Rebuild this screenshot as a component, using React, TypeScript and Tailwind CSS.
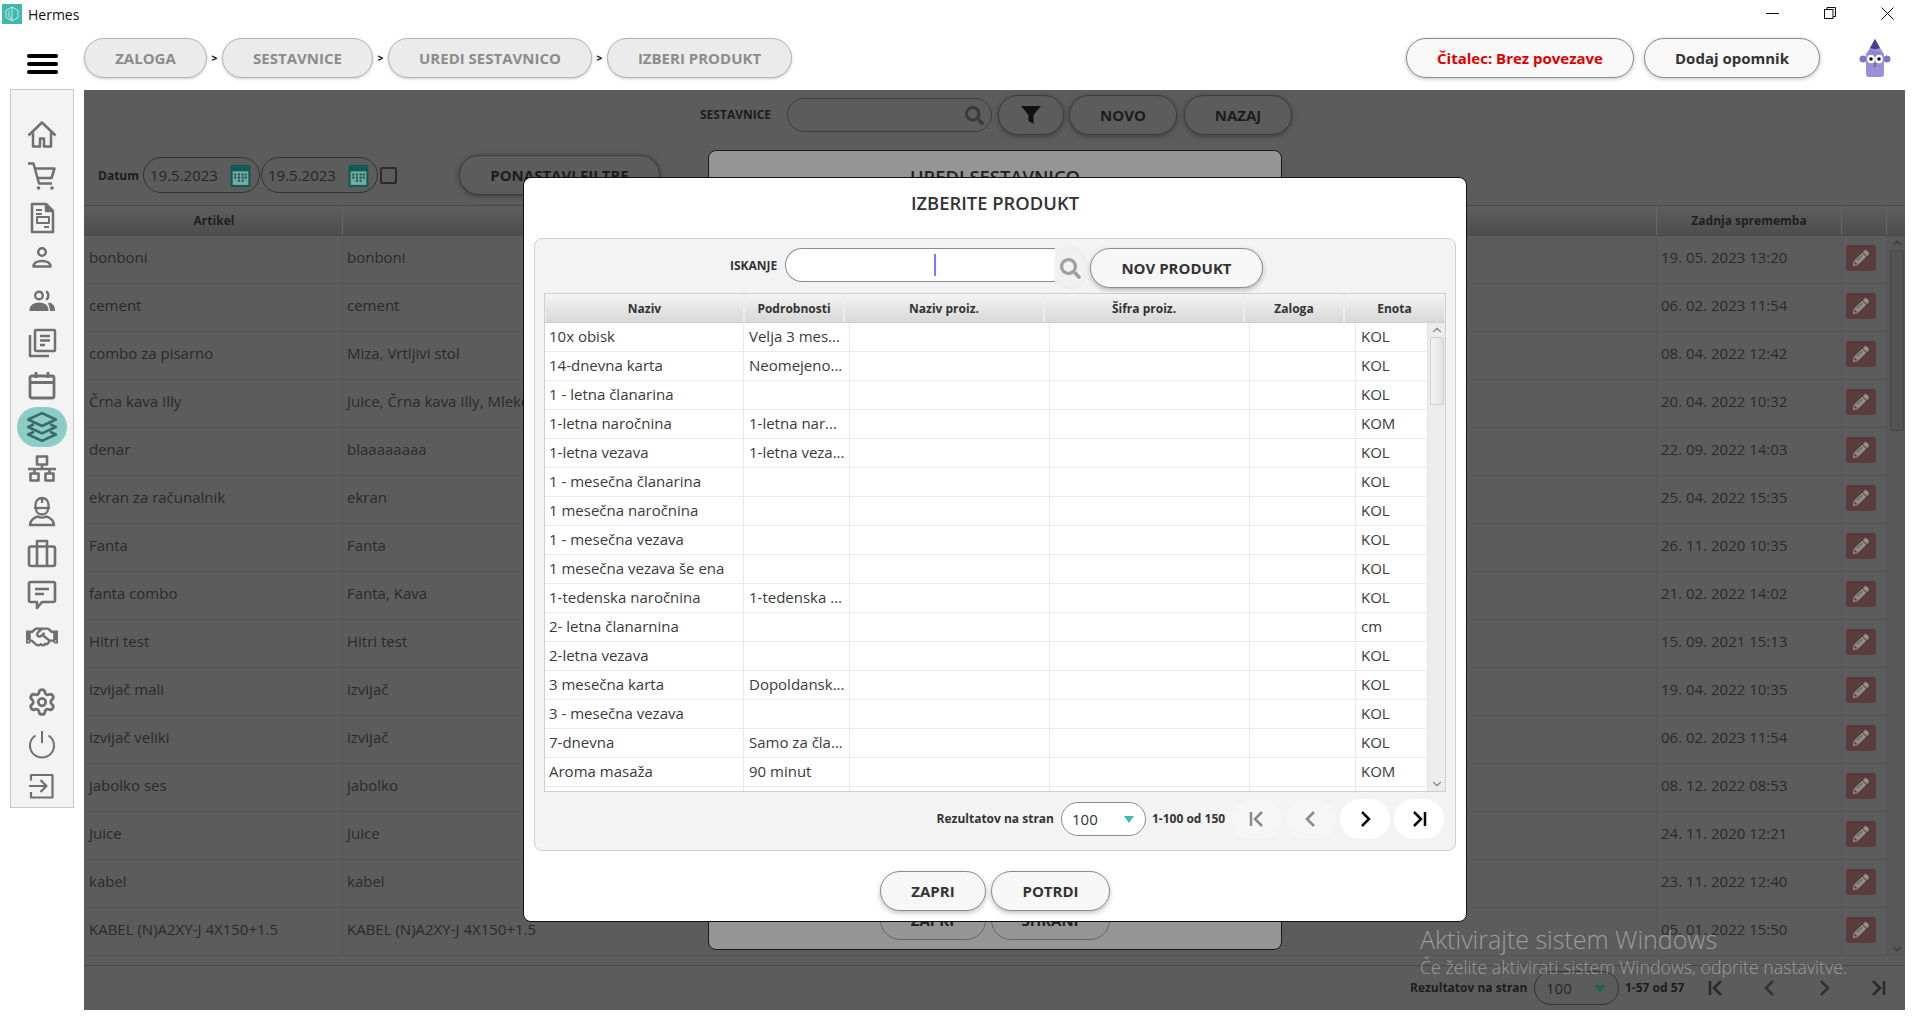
import React from "react";
import { Settings, ChevronUp, ChevronDown } from "lucide-react";
import { FaPencilAlt, FaRegHandshake, FaSearch } from "react-icons/fa";

const bgRows = [
  ["bonboni", "bonboni", "19. 05. 2023 13:20"],
  ["cement", "cement", "06. 02. 2023 11:54"],
  ["combo za pisarno", "Miza, Vrtljivi stol", "08. 04. 2022 12:42"],
  ["Črna kava Illy", "Juice, Črna kava Illy, Mleko", "20. 04. 2022 10:32"],
  ["denar", "blaaaaaaaa", "22. 09. 2022 14:03"],
  ["ekran za računalnik", "ekran", "25. 04. 2022 15:35"],
  ["Fanta", "Fanta", "26. 11. 2020 10:35"],
  ["fanta combo", "Fanta, Kava", "21. 02. 2022 14:02"],
  ["Hitri test", "Hitri test", "15. 09. 2021 15:13"],
  ["izvijač mali", "izvijač", "19. 04. 2022 10:35"],
  ["izvijač veliki", "izvijač", "06. 02. 2023 11:54"],
  ["jabolko ses", "jabolko", "08. 12. 2022 08:53"],
  ["Juice", "Juice", "24. 11. 2020 12:21"],
  ["kabel", "kabel", "23. 11. 2022 12:40"],
  ["KABEL (N)A2XY-J 4X150+1.5", "KABEL (N)A2XY-J 4X150+1.5", "05. 01. 2022 15:50"],
];

const products = [
  ["10x obisk", "Velja 3 mes...", "KOL"],
  ["14-dnevna karta", "Neomejeno...", "KOL"],
  ["1 - letna članarina", "", "KOL"],
  ["1-letna naročnina", "1-letna nar...", "KOM"],
  ["1-letna vezava", "1-letna veza...", "KOL"],
  ["1 - mesečna članarina", "", "KOL"],
  ["1 mesečna naročnina", "", "KOL"],
  ["1 - mesečna vezava", "", "KOL"],
  ["1 mesečna vezava še ena", "", "KOL"],
  ["1-tedenska naročnina", "1-tedenska ...", "KOL"],
  ["2- letna članarnina", "", "cm"],
  ["2-letna vezava", "", "KOL"],
  ["3 mesečna karta", "Dopoldansk...", "KOL"],
  ["3 - mesečna vezava", "", "KOL"],
  ["7-dnevna", "Samo za čla...", "KOL"],
  ["Aroma masaža", "90 minut", "KOM"],
  ["", "", ""],
];

function Sep() {
  return <span className="w-[15px] h-[40px] flex items-center justify-center text-[10px] font-extrabold text-[#222]">&gt;</span>;
}

function Crumb({ w, children }: { w: string; children: React.ReactNode }) {
  return (
    <div className={`${w} h-[40px] rounded-[20px] border border-[#b5b5b5] bg-[#ebebeb] flex items-center justify-center text-[15px] font-bold text-[#8c8c8c] shadow-[0_1px_3px_rgba(0,0,0,0.2)]`}>
      {children}
    </div>
  );
}

const G = "#707070";

function Ico({ children, fill = "none", w = 2.5 }: { children: React.ReactNode; fill?: string; w?: number }) {
  return (
    <svg width="30" height="30" viewBox="0 0 30 30" fill={fill} stroke={G} strokeWidth={w} strokeLinejoin="round">
      {children}
    </svg>
  );
}

function Mascot() {
  return (
    <svg width="32" height="38" viewBox="0 0 32 38">
      <circle cx="4" cy="20" r="3.500" fill="#7f74c8" />
      <circle cx="28" cy="20" r="3.500" fill="#7f74c8" />
      <path d="M16 0l5 9 4 6v20q0 3-3 3H10q-3 0-3-3V15l4-6z" fill="#9b8fd8" />
      <path d="M11 9l5-9 5 9c-3 1.500-7 1.500-10 0z" fill="#4a3e90" />
      <path d="M10 12l11 3M10 15l9 2" stroke="#6f63b8" strokeWidth="0.700" fill="none" />
      <ellipse cx="12" cy="20" rx="3.800" ry="4.300" fill="#fff" />
      <ellipse cx="20" cy="20" rx="3.800" ry="4.300" fill="#fff" />
      <circle cx="12" cy="20" r="1.800" fill="#111" />
      <circle cx="20" cy="20" r="1.800" fill="#111" />
      <path d="M16 24v4" stroke="#333" strokeWidth="0.800" />
    </svg>
  );
}

function Side({ children, active }: { children: React.ReactNode; active?: boolean }) {
  return (
    <div className="h-[42px] flex items-center justify-center">
      <div className={`w-[50px] h-[40px] rounded-[20px] flex items-center justify-center ${active ? "bg-[#8dcdc7]" : ""}`}>{children}</div>
    </div>
  );
}

function CalIcon() {
  return (
    <svg width="21" height="23" viewBox="0 0 20 22" className="shrink-0">
      <rect x="0.500" y="1" width="19" height="21" fill="#0e5c53" />
      <rect x="2.500" y="7" width="15" height="13" fill="#7aa8a2" />
      <path d="M4 9h2v2H4zM7.500 9h2v2h-2zM11 9h2v2h-2zM14 9h2v2h-2zM4 12h2v2H4zM7.500 12h2v2h-2zM11 12h2v2h-2zM14 12h2v2h-2zM7.500 15h2v2h-2zM11 15h2v2h-2z" fill="#0e5c53" />
    </svg>
  );
}

function DateField() {
  return (
    <div className="w-[117px] h-[36px] rounded-[18px] border border-[#333] flex items-center justify-between pl-[6px] pr-[8px] text-[15px] text-[#262626]">
      <span>19.5.2023</span>
      <CalIcon />
    </div>
  );
}

function DarkBtn({ w, children }: { w: string; children: React.ReactNode }) {
  return (
    <div className={`${w} h-[40px] rounded-[20px] border border-[#3d3d3d] bg-[#5c5c5c] flex items-center justify-center text-[15px] font-bold text-[#1c1c1c] shadow-[0_1px_5px_rgba(0,0,0,0.35)]`}>
      {children}
    </div>
  );
}

function WhiteBtn({ w, children }: { w: string; children: React.ReactNode }) {
  return (
    <div className={`${w} h-[40px] rounded-[20px] border border-[#8c8c8c] bg-[#f7f7f7] flex items-center justify-center text-[15px] font-bold text-[#333] shadow-[0_2px_5px_rgba(0,0,0,0.25)]`}>
      {children}
    </div>
  );
}

function PagerGlyph({ kind, color, w = 2.500 }: { kind: "first" | "prev" | "next" | "last"; color: string; w?: number }) {
  const d = {
    first: "M5 4v14M16 4l-7 7 7 7",
    prev: "M14 4l-7 7 7 7",
    next: "M8 4l7 7-7 7",
    last: "M17 4v14M6 4l7 7-7 7",
  }[kind];
  return (
    <svg width="22" height="22" viewBox="0 0 22 22" fill="none" stroke={color} strokeWidth={w}>
      <path d={d} />
    </svg>
  );
}

function PagerBtn({ kind, on }: { kind: "first" | "prev" | "next" | "last"; on?: boolean }) {
  return (
    <div className={`w-[50px] h-[40px] rounded-[20px] flex items-center justify-center ${on ? "bg-white" : "bg-[#f6f6f6]"}`}>
      <PagerGlyph kind={kind} color={on ? "#0a0a0a" : "#8a8a8a"} />
    </div>
  );
}

export default function App() {
  return (
    <div className="relative w-[1920px] h-[1029px] overflow-hidden bg-white font-['Open_Sans',sans-serif] flex flex-col">
      {/* title bar */}
      <div className="h-[30px] flex items-center justify-between pl-[2px]">
        <div className="flex items-center gap-[6px] text-[14px] text-[#111] mt-[-2px]">
          <svg width="20" height="20" viewBox="0 0 20 20">
            <rect width="20" height="20" fill="#3fb8ad" />
            <path d="M10 3l6 3.500v7L10 17l-6-3.500v-7zM10 3v14M7 7v6l3 2" fill="none" stroke="#d6f1ee" strokeWidth="0.900" />
          </svg>
          <span>Hermes</span>
        </div>
        <div className="flex items-center pr-[26px] gap-[45px] mt-[-4px]">
          <div className="w-[13px] h-[1px] bg-[#111]" />
          <svg width="12" height="12" viewBox="0 0 12 12" fill="none" stroke="#111" strokeWidth="1">
            <rect x="0.500" y="2.500" width="8.500" height="9" />
            <path d="M3 2.500V.5h8.500v9H9" />
          </svg>
          <svg width="13" height="13" viewBox="0 0 13 13" fill="none" stroke="#111" strokeWidth="1">
            <path d="M.5.5l12 12M12.500.5l-12 12" />
          </svg>
        </div>
      </div>

      {/* app bar */}
      <div className="h-[60px] flex items-start pt-[8px]">
        <div className="w-[84px] h-[40px] flex flex-col items-center justify-center gap-[4px] pl-[1px] pt-[12px]">
          <div className="w-[31px] h-[4px] rounded-full bg-black shrink-0" />
          <div className="w-[31px] h-[4px] rounded-full bg-black shrink-0" />
          <div className="w-[31px] h-[4px] rounded-full bg-black shrink-0" />
        </div>
        <Crumb w="w-[123px]">ZALOGA</Crumb>
        <Sep />
        <Crumb w="w-[151px]">SESTAVNICE</Crumb>
        <Sep />
        <Crumb w="w-[204px]">UREDI SESTAVNICO</Crumb>
        <Sep />
        <Crumb w="w-[185px]">IZBERI PRODUKT</Crumb>
        <div className="flex-1" />
        <div className="w-[228px] h-[40px] rounded-[20px] border border-[#8c8c8c] bg-[#f8f8f8] flex items-center justify-center text-[15px] font-bold text-[#e00000] shadow-[0_1px_4px_rgba(0,0,0,0.25)]">
          Čitalec: Brez povezave
        </div>
        <div className="ml-[10px] w-[176px] h-[40px] rounded-[20px] border border-[#8c8c8c] bg-[#f8f8f8] flex items-center justify-center text-[15px] font-bold text-[#333] shadow-[0_1px_4px_rgba(0,0,0,0.25)]">
          Dodaj opomnik
        </div>
        <div className="w-[100px] flex justify-center pl-[10px] pt-[1px]">
          <Mascot />
        </div>
      </div>

      {/* body */}
      <div className="flex items-start">
        <div className="ml-[10px] mt-[-1px] w-[64px] h-[719px] bg-[#f3f3f3] border border-[#c8c8c8] pt-[22px] flex flex-col">
          <Side>
            <Ico>
              <g transform="translate(0 1.500)">
                <path d="M1.500 16L15 3l13.500 13" />
                <path d="M6 13v14h7v-8h4v8h7V13" />
              </g>
            </Ico>
          </Side>
          <Side>
            <Ico>
              <g transform="translate(0 1)">
                <path d="M1 2.500h5.500L12 22.500h13" />
                <path d="M8 7.500h19.500l-3 9.500H11" />
                <circle cx="11.500" cy="27" r="1.800" fill={G} stroke="none" />
                <circle cx="25" cy="27" r="1.800" fill={G} stroke="none" />
              </g>
            </Ico>
          </Side>
          <Side>
            <svg width="30" height="32" viewBox="0 0 30 32" fill="none" stroke={G} strokeWidth="2.500" strokeLinejoin="round" className="mt-[1px]">
              <path d="M5 2h14l7 7v21H5z" />
              <path d="M19 2v7h7" fill={G} />
              <path d="M9 8h6M9 12h6" strokeWidth="2" />
              <rect x="10" y="15" width="12" height="6" strokeWidth="2" />
              <path d="M17 25h5" strokeWidth="2" />
            </svg>
          </Side>
          <Side>
            <Ico>
              <circle cx="15" cy="8" r="3.800" />
              <path d="M6.500 22.500c0-3.600 4-5.500 8.500-5.500s8.500 1.900 8.500 5.500z" />
            </Ico>
          </Side>
          <Side>
            <svg width="30" height="30" viewBox="0 0 30 30" fill={G} stroke={G} strokeWidth="2">
              <circle cx="12" cy="9.500" r="3.800" fill="none" strokeWidth="2.400" />
              <path d="M19 5.500c3 .8 3 7 0 8" fill="none" strokeWidth="2.400" />
              <path d="M3.500 24c0-4.500 4-6.500 8.500-6.500s8.500 2 8.500 6.500z" />
              <path d="M21.500 17.500c3 .5 5.500 2.500 5.500 6.500h-4" />
            </svg>
          </Side>
          <Side>
            <Ico>
              <rect x="8" y="2" width="20" height="21" rx="1" />
              <path d="M3 7v21h19" />
              <path d="M13 8h10M13 12.500h10M13 17h5" />
            </Ico>
          </Side>
          <Side>
            <Ico w={2.800}>
              <rect x="3" y="6" width="24" height="22" rx="2" />
              <path d="M3 12.500h24M9 2v6M21 2v6" />
            </Ico>
          </Side>
          <Side active>
            <svg width="32" height="32" viewBox="0 0 30 30" fill="none" stroke="#3d6b68" strokeWidth="2.500" strokeLinejoin="round">
              <path d="M15 2l13 6-13 6-13-6z" />
              <path d="M7.500 12.500L2 15l13 6 13-6-5.500-2.500" />
              <path d="M7.500 19.500L2 22l13 6 13-6-5.500-2.500" />
            </svg>
          </Side>
          <Side>
            <Ico w={2.600}>
              <rect x="10" y="2.500" width="10" height="8" />
              <path d="M15 10.500V15M1 15h28M7.500 15v4M22.500 15v4" />
              <rect x="3.500" y="19.500" width="8" height="7" />
              <rect x="18.500" y="19.500" width="8" height="7" />
            </Ico>
          </Side>
          <Side>
            <svg width="30" height="32" viewBox="0 0 30 32" fill="none" stroke={G} strokeWidth="2.300">
              <path d="M8.500 13V9.500a6.500 6.500 0 0 1 13 0V13" />
              <path d="M7 13h16" />
              <path d="M9 13.500c0 8 12 8 12 0" />
              <path d="M15 3v5" />
              <path d="M3 30c0-5 5-8 8-8.500 2 1.500 6 1.500 8 0 3 .5 8 3.500 8 8.500z" />
            </svg>
          </Side>
          <Side>
            <Ico w={2.600}>
              <rect x="2" y="8.500" width="26" height="19.500" rx="2" />
              <path d="M10 8.500V3h10v5.500M10 8.500V28M20 8.500V28" />
            </Ico>
          </Side>
          <Side>
            <Ico w={2.600}>
              <path d="M3.500 2h23A1.500 1.500 0 0 1 28 3.500v17a1.500 1.500 0 0 1-1.500 1.500H15l-5 6v-6H3.500A1.500 1.500 0 0 1 2 20.500v-17A1.500 1.500 0 0 1 3.500 2z" />
              <path d="M8 9h14M8 14h9" />
            </Ico>
          </Side>
          <Side>
            <FaRegHandshake size={32} color={G} />
          </Side>
          <div className="h-[23px]" />
          <Side><Settings size={30} color={G} strokeWidth={2.200} /></Side>
          <Side>
            <Ico w={2}>
              <path d="M8.500 6.500a12 12 0 1 0 13 0" />
              <path d="M15 2v12" />
            </Ico>
          </Side>
          <Side>
            <Ico w={2.200}>
              <path d="M4 9.500V4h21.500v22.500H4V21" />
              <path d="M2 15h17M13.500 9l6 6-6 6" />
            </Ico>
          </Side>
        </div>

        {/* dimmed main area */}
        <div className="ml-[10px] w-[1821px] h-[920px] bg-[#5c5c5c] flex flex-col">
          <div className="mt-[5px] h-[40px] flex items-center pl-[616px]">
            <span className="w-[87px] text-[12px] font-bold text-[#1c1c1c]">SESTAVNICE</span>
            <div className="w-[205px] h-[34px] rounded-[17px] border border-[#3d3d3d] flex items-center justify-end pr-[7px]">
              <FaSearch size={19} color="#3a3a3a" />
            </div>
            <div className="w-[6px]" />
            <DarkBtn w="w-[66px]">
              <svg width="20" height="18" viewBox="0 0 20 18"><path d="M0 0h20l-7.500 9v9l-5-3V9z" fill="#111" /></svg>
            </DarkBtn>
            <div className="w-[5px]" />
            <DarkBtn w="w-[108px]">NOVO</DarkBtn>
            <div className="w-[7px]" />
            <DarkBtn w="w-[108px]">NAZAJ</DarkBtn>
          </div>

          <div className="mt-[20px] h-[40px] flex items-center pl-[14px]">
            <span className="w-[45px] pt-[2px] text-[12px] font-bold text-[#1c1c1c]">Datum</span>
            <DateField />
            <div className="w-[1px]" />
            <DateField />
            <div className="ml-[2px] w-[17px] h-[17px] rounded-[2px] border-2 border-[#2a2a2a]" />
            <div className="ml-[62px]"><DarkBtn w="w-[201px]">PONASTAVI FILTRE</DarkBtn></div>
          </div>

          <div className="mt-[10px] h-[760px] flex flex-col overflow-hidden">
            <div className="h-[31px] shrink-0 grid grid-cols-[259px_1314px_185px_45px_18px] border-y border-[#4a4a4a] bg-gradient-to-b from-[#5e5e5e] to-[#4d4d4d] text-[12px] font-bold text-[#1f1f1f]">
              <div className="flex items-center justify-center border-r border-[#666] pl-[2px]">Artikel</div>
              <div className="border-r border-[#666]" />
              <div className="flex items-center justify-center border-r border-[#666]">Zadnja sprememba</div>
              <div className="border-r border-[#666]" />
              <div />
            </div>
            <div className="flex">
              <div className="w-[1803px]">
                {bgRows.map((r) => (
                  <div key={r[2] + r[0]} className="h-[48px] grid grid-cols-[259px_1314px_185px_45px] border-b border-[#575757] text-[15px] text-[#2a2a2a]">
                    <div className="flex items-center pl-[5px] pb-[4px] border-r border-[#575757] whitespace-nowrap">{r[0]}</div>
                    <div className="flex items-center pl-[4px] pb-[4px] border-r border-[#575757] whitespace-nowrap">{r[1]}</div>
                    <div className="flex items-center pl-[4px] pb-[4px] border-r border-[#575757] whitespace-nowrap">{r[2]}</div>
                    <div className="flex items-start pt-[9px] pl-[4px]">
                      <div className="w-[30px] h-[26px] rounded-[2px] bg-[#5a3c3c] flex items-center justify-center">
                        <FaPencilAlt size={16} color="#8f8f8f" />
                      </div>
                    </div>
                  </div>
                ))}
              </div>
              <div className="w-[18px] h-[720px] bg-[#585858] border-l border-[#555] flex flex-col items-center">
                <ChevronUp size={14} color="#3a3a3a" />
                <div className="w-[14px] h-[181px] rounded-[2px] border border-[#474747] bg-[#545454]" />
                <div className="flex-1" />
                <ChevronDown size={14} color="#3a3a3a" />
              </div>
            </div>
          </div>

          <div className="h-[45px] border-t border-[#484848] flex items-center pl-[1326px] text-[12px] font-bold text-[#1c1c1c]">
            <span className="w-[124px]">Rezultatov na stran</span>
            <div className="w-[85px] h-[34px] rounded-[17px] border border-[#333] flex items-center justify-between pl-[11px] pr-[12px] text-[15px] font-normal text-[#262626]">
              <span>100</span>
              <div className="w-0 h-0 border-x-[6px] border-x-transparent border-t-[7px] border-t-[#17665e]" />
            </div>
            <span className="ml-[6px] w-[60px] whitespace-nowrap">1-57 od 57</span>
            <div className="ml-[20px] flex gap-[32px]">
              <PagerGlyph kind="first" color="#2a2a2a" />
              <PagerGlyph kind="prev" color="#333" />
              <PagerGlyph kind="next" color="#333" />
              <PagerGlyph kind="last" color="#2a2a2a" />
            </div>
          </div>
        </div>
      </div>

      {/* panel under the dialog */}
      <div className="absolute left-[708px] top-[150px] w-[574px] h-[800px] rounded-[8px] border border-[#1a1a1a] bg-[#959595] flex flex-col items-center justify-between pb-[9px]">
        <div className="pt-[12px] text-[18.400px] font-semibold text-[#222]">UREDI SESTAVNICO</div>
        <div className="flex gap-[5px] mr-[1px]">
          <div className="w-[106px] h-[40px] rounded-[20px] border border-[#666] bg-[#959595] flex items-center justify-center text-[15px] font-bold text-[#222]">ZAPRI</div>
          <div className="w-[119px] h-[40px] rounded-[20px] border border-[#666] bg-[#959595] flex items-center justify-center text-[15px] font-bold text-[#222]">SHRANI</div>
        </div>
      </div>

      {/* Windows watermark */}
      <div className="absolute left-[1420px] top-[922px] text-white/40 font-light pointer-events-none whitespace-nowrap">
        <div className="text-[25px] leading-[34px]">Aktivirajte sistem Windows</div>
        <div className="text-[17.800px] leading-[22px]">Če želite aktivirati sistem Windows, odprite nastavitve.</div>
      </div>

      {/* dialog */}
      <div className="absolute left-[523px] top-[177px] w-[944px] h-[745px] rounded-[8px] border border-[#111] bg-white flex flex-col">
        <div className="h-[60px] pb-[10px] flex items-center justify-center text-[18.400px] font-semibold text-[#333]">IZBERITE PRODUKT</div>
        <div className="ml-[10px] w-[922px] h-[613px] rounded-[8px] border border-[#d0d0d0] bg-[#f3f3f3] px-[9px] pt-[9px]">
          <div className="h-[40px] flex items-start">
            <span className="ml-[186px] w-[55px] h-[34px] pt-[2px] flex items-center text-[12px] font-bold text-[#333]">ISKANJE</span>
            <div className="w-[270px] h-[34px] rounded-l-[17px] border-y border-l border-[#8c8c8c] bg-white flex items-center pl-[148px]">
              <div className="w-[2px] h-[22px] bg-[#7b7bf5]" />
            </div>
            <div className="w-[30px] h-[40px] rounded-[15px] bg-[#f1f1f1] shadow-[0_0_3px_rgba(0,0,0,0.08)] flex items-center justify-center">
              <FaSearch size={21} color="#a0a0a0" />
            </div>
            <div className="ml-[5px]"><WhiteBtn w="w-[173px]">NOV PRODUKT</WhiteBtn></div>
          </div>

          <div className="mt-[5px] w-[902px] h-[499px] border border-[#cfcfcf] bg-white overflow-hidden flex flex-col">
            <div className="h-[29px] shrink-0 grid grid-cols-[199px_100px_200px_200px_100px_101px] bg-gradient-to-b from-[#f4f4f4] to-[#d8d8d8] border-b border-[#cfcfcf] text-[12px] font-bold text-[#333]">
              {["Naziv", "Podrobnosti", "Naziv proiz.", "Šifra proiz.", "Zaloga", "Enota"].map((h) => (
                <div key={h} className="flex items-center justify-center border-x border-x-[#ededed] pt-[2px]">{h}</div>
              ))}
            </div>
            <div className="flex flex-1 min-h-0">
              <div className="w-[882px] overflow-hidden">
                {products.map((p, i) => (
                  <div key={i} className="h-[29px] grid grid-cols-[199px_106px_200px_200px_106px_71px] border-b border-[#e9e9e9] text-[15px] text-[#3a3a3a]">
                    <div className="flex items-center pl-[4px] pb-[2px] border-r border-[#e9e9e9] whitespace-nowrap">{p[0]}</div>
                    <div className="flex items-center pl-[5px] pb-[2px] border-r border-[#e9e9e9] whitespace-nowrap">{p[1]}</div>
                    <div className="border-r border-[#e9e9e9]" />
                    <div className="border-r border-[#e9e9e9]" />
                    <div className="border-r border-[#e9e9e9]" />
                    <div className="flex items-center pl-[5px] pb-[2px]">{p[2]}</div>
                  </div>
                ))}
              </div>
              <div className="w-[18px] bg-[#ececec] border-l border-[#e4e4e4] flex flex-col items-center">
                <ChevronUp size={14} color="#8a8a8a" />
                <div className="w-[14px] h-[68px] rounded-[2px] border border-[#d0d0d0] bg-gradient-to-r from-[#f4f4f4] to-[#e2e2e2]" />
                <div className="flex-1" />
                <ChevronDown size={14} color="#8a8a8a" />
              </div>
            </div>
          </div>

          <div className="mt-[7px] h-[40px] flex items-center justify-end pr-[2px] text-[12px] font-bold text-[#333]">
            <span>Rezultatov na stran</span>
            <div className="ml-[7px] w-[85px] h-[34px] rounded-[17px] border border-[#8c8c8c] bg-white flex items-center justify-between pl-[10px] pr-[11px] text-[15px] font-normal text-[#333]">
              <span>100</span>
              <div className="w-0 h-0 border-x-[5px] border-x-transparent border-t-[7px] border-t-[#3fb8ad]" />
            </div>
            <span className="ml-[6px] w-[73px] whitespace-nowrap">1-100 od 150</span>
            <div className="ml-[7px] flex gap-[4px]">
              <PagerBtn kind="first" />
              <PagerBtn kind="prev" />
              <PagerBtn kind="next" on />
              <PagerBtn kind="last" on />
            </div>
          </div>
        </div>
        <div className="mt-[20px] flex justify-center gap-[5px]">
          <WhiteBtn w="w-[106px]">ZAPRI</WhiteBtn>
          <WhiteBtn w="w-[119px]">POTRDI</WhiteBtn>
        </div>
      </div>
    </div>
  );
}
